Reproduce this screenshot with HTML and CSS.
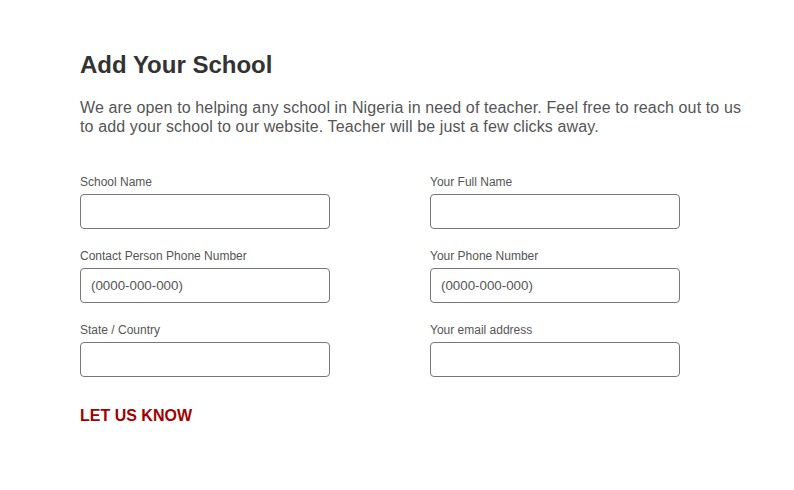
FILE: index.html
```html
<!DOCTYPE html>
<html>
<head>
<meta charset="utf-8">
<link rel="stylesheet" href="styles.css">
</head>
<body>
<main class="page">
  <h1 class="title">Add Your School</h1>
  <p class="intro">We are open to helping any school in Nigeria in need of teacher. Feel free to reach out to us to add your school to our website. Teacher will be just a few clicks away.</p>
  <form class="form">
    <div class="grid">
      <label class="field"><span class="label">School Name</span><input class="input" type="text"></label>
      <label class="field"><span class="label">Your Full Name</span><input class="input" type="text"></label>
      <label class="field"><span class="label">Contact Person Phone Number</span><input class="input" type="text" placeholder="(0000-000-000)"></label>
      <label class="field"><span class="label">Your Phone Number</span><input class="input" type="text" placeholder="(0000-000-000)"></label>
      <label class="field"><span class="label">State / Country</span><input class="input" type="text"></label>
      <label class="field"><span class="label">Your email address</span><input class="input" type="text"></label>
    </div>
    <button class="submit" type="button">LET US KNOW</button>
  </form>
</main>
</body>
</html>
```
FILE: styles.css
```css
* { box-sizing: border-box; }
html, body { margin: 0; background: #fff; }
body { font-family: "Liberation Sans", Arial, sans-serif; }
.page { padding: 50px 0 0 80px; width: 750px; }
.title { margin: 0; font-size: 24px; font-weight: bold; color: #333; line-height: 30px; }
.intro { margin: 18px 0 0; font-size: 16px; letter-spacing: 0.12px; line-height: 19px; color: #555; max-width: 670px; }
.form { margin-top: 39px; }
.grid { display: grid; grid-template-columns: 250px 250px; column-gap: 100px; row-gap: 20px; }
.field { display: flex; flex-direction: column; gap: 5px; }
.label { font-size: 12px; line-height: 14px; color: #555; }
.input { width: 250px; height: 35px; border: 1px solid #777; border-radius: 4px; padding: 0 10px; font-family: inherit; font-size: 13.33px; color: #333; background: #fff; }
.input::placeholder { color: #555; }
.submit { margin-top: 30px; padding: 0; border: 0; background: none; font-family: inherit; font-size: 16px; font-weight: bold; color: #a30000; cursor: pointer; }
```
